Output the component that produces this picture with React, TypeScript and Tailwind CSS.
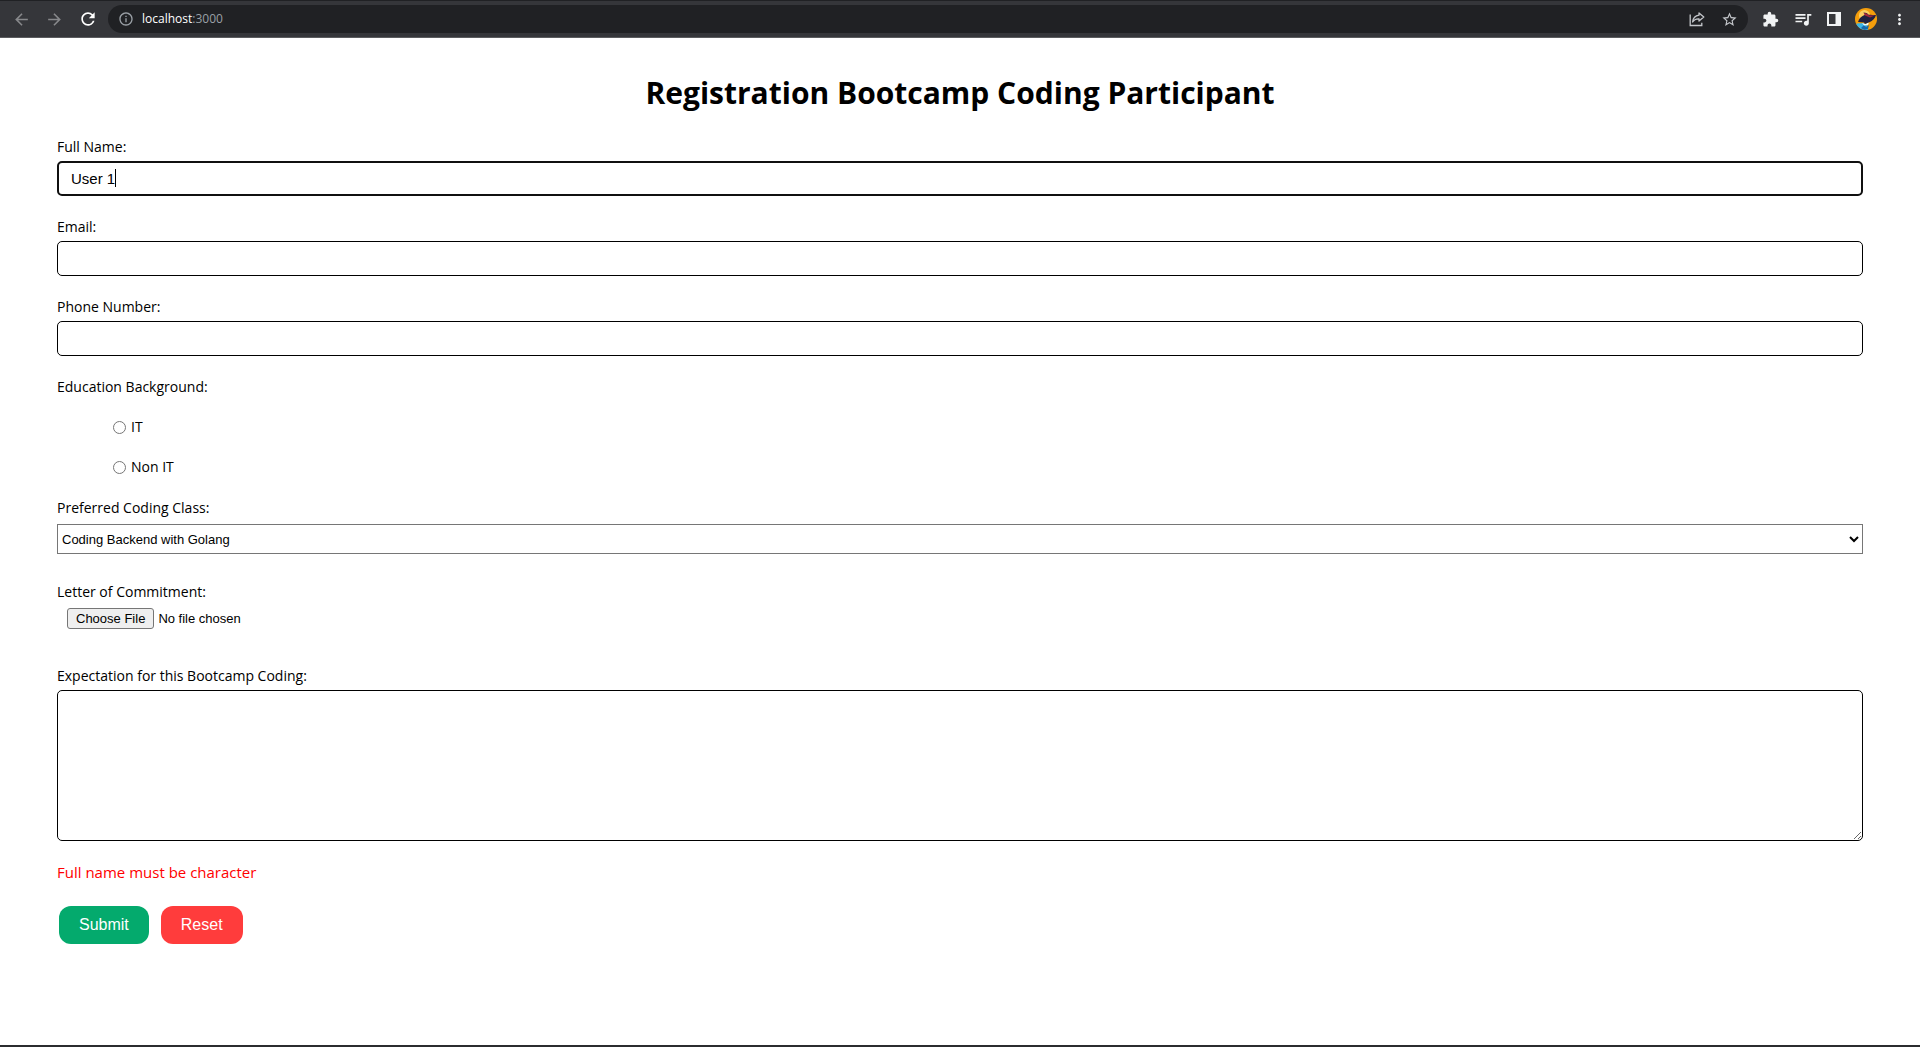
import React, { useState } from "react";
import {
  MdArrowBack,
  MdArrowForward,
  MdRefresh,
  MdInfoOutline,
  MdStarOutline,
  MdExtension,
  MdQueueMusic,
  MdMoreVert,
} from "react-icons/md";

const textBox =
  "block h-[35px] w-full rounded-[5px] border border-black bg-white px-3 font-['Liberation_Sans',Arial,sans-serif] text-[15px] text-black outline-none";

function ShareIcon() {
  return (
    <svg width="16" height="16" viewBox="0 0 16 16" fill="none" stroke="currentColor" strokeWidth="1.3">
      <path d="M1.200 3.500v11h11.600v-2.700" />
      <path d="M10 2 14.800 6 10 10V7.800C7 7.600 5 8.600 3.600 11 4 7.400 6 4.700 10 4.200Z" strokeLinejoin="round" />
    </svg>
  );
}

function SidePanelIcon() {
  return (
    <svg width="14" height="14" viewBox="0 0 14 14">
      <path fill="currentColor" fillRule="evenodd" d="M0 0h14v14H0zM2 2v10h6.500V2z" />
    </svg>
  );
}

function Avatar() {
  return (
    <svg width="22" height="22" viewBox="0 0 22 22">
      <defs>
        <clipPath id="avatar-clip">
          <circle cx="11" cy="11" r="11" />
        </clipPath>
      </defs>
      <g clipPath="url(#avatar-clip)">
        <rect width="22" height="22" fill="#f59e0b" />
        <circle cx="9.500" cy="7.500" r="5.500" fill="#fbcf62" />
        <path d="M1 16c2.500-1.500 5 0 7-1l4 2 1 5H3z" fill="#38b6e8" />
        <path d="M6 20l3-3 2 2 3-2-1 4-4 1z" fill="#1769aa" />
        <path d="M7 15l3 1 4-1.500-1 2.500-4 .5z" fill="#e8f7fd" />
        <path d="M3 14c1-3.500 3.500-6 7-7.300L8.500 4.500c2.300 0 4 .8 5 2.200 3 0 5 .3 7.500.3l-1 2.500c-2 3-4.500 4.700-7 5.200L10 16l-1-1.500z" fill="#20213f" />
        <path d="M8.500 4.700c3 .3 4.500 1.500 5.500 2.800l6-.2-5 2.200-5-2z" fill="#a3273a" />
      </g>
    </svg>
  );
}

function BrowserBar() {
  return (
    <header className="flex h-[38px] items-center border-t border-b border-t-[#202124] border-b-[#5b5c5f] bg-[#35363a] px-3 font-['Open_Sans','Noto_Sans',sans-serif]">
      <nav className="flex items-center gap-3.5 text-[#87888b]">
        <button type="button" aria-label="Back"><MdArrowBack size={19} /></button>
        <button type="button" aria-label="Forward"><MdArrowForward size={19} /></button>
        <button type="button" aria-label="Reload" className="text-white"><MdRefresh size={20} /></button>
      </nav>
      <div className="ml-2.5 flex h-7 flex-1 items-center rounded-full bg-[#202124] px-2.5 text-[#9aa0a6]">
        <MdInfoOutline size={16} />
        <p className="ml-2 flex-1 text-[12px]">
          <span className="text-white">localhost</span>:3000
        </p>
        <div className="flex items-center gap-4 text-[#c4c7cb]">
          <button type="button" aria-label="Share"><ShareIcon /></button>
          <button type="button" aria-label="Bookmark"><MdStarOutline size={17} /></button>
        </div>
      </div>
      <div className="ml-3.5 flex items-center gap-3.5 text-[#f1f3f4]">
        <button type="button" aria-label="Extensions"><MdExtension size={17} /></button>
        <button type="button" aria-label="Media"><MdQueueMusic size={20} /></button>
        <button type="button" aria-label="Side panel"><SidePanelIcon /></button>
        <button type="button" aria-label="Profile"><Avatar /></button>
        <button type="button" aria-label="Menu"><MdMoreVert size={17} /></button>
      </div>
    </header>
  );
}

function Field({ id, label, children }: { id: string; label: string; children: React.ReactNode }) {
  return (
    <div className="flex flex-col gap-0.5">
      <label htmlFor={id} className="self-start">{label}</label>
      {children}
    </div>
  );
}

export default function App() {
  const [name, setName] = useState("User 1");
  return (
    <div className="flex min-h-screen flex-col border-b-2 border-[#2b2c2f] bg-white text-black">
      <BrowserBar />
      <main className="flex-1 px-[57px] pt-8 pb-8 font-['Open_Sans','Noto_Sans',sans-serif] text-[14px] leading-6">
        <h1 className="text-center text-[30px] leading-[46px] font-bold">
          Registration Bootcamp Coding Participant
        </h1>
        <form className="mt-[19px] flex flex-col gap-[19px]" onSubmit={(e) => e.preventDefault()}>
          <Field id="name" label="Full Name:">
            <div className="relative">
              <input
                id="name"
                type="text"
                value={name}
                onChange={(e) => setName(e.target.value)}
                className="block h-[35px] w-full rounded-[5px] border-2 border-[#101010] bg-white px-3 font-['Liberation_Sans',Arial,sans-serif] text-[15px] text-black outline-none"
              />
              <span className="pointer-events-none absolute top-2 left-[58px] h-[18px] w-px bg-black" />
            </div>
          </Field>
          <Field id="email" label="Email:">
            <input id="email" type="email" className={textBox} />
          </Field>
          <Field id="phone" label="Phone Number:">
            <input id="phone" type="tel" className={textBox} />
          </Field>
          <fieldset>
            <legend>Education Background:</legend>
            <div className="mt-2 ml-14 flex flex-col">
              <label className="flex h-10 items-center gap-[5px]">
                <input type="radio" name="education" value="it" className="size-[13px]" />
                IT
              </label>
              <label className="flex h-10 items-center gap-[5px]">
                <input type="radio" name="education" value="non-it" className="size-[13px]" />
                Non IT
              </label>
            </div>
          </fieldset>
          <div className="-mt-2.5 flex flex-col gap-[26px]">
            <Field id="class" label="Preferred Coding Class:">
              <select
                id="class"
                className="mt-0.5 h-[30px] w-full border border-[#767676] bg-white font-['Liberation_Sans',Arial,sans-serif] text-[13px] text-black"
              >
                <option>Coding Backend with Golang</option>
                <option>Coding Frontend with ReactJS</option>
                <option>Fullstack Developer</option>
              </select>
            </Field>
            <Field id="letter" label="Letter of Commitment:">
              <input
                id="letter"
                type="file"
                className="mt-0.5 h-[30px] px-2.5 font-['Liberation_Sans',Arial,sans-serif] text-[13px] leading-[15px] file:mr-1 file:rounded-[3px] file:border file:border-solid file:border-[#767676] file:bg-[#efefef] file:px-2 file:py-0.5"
              />
            </Field>
            <Field id="expectation" label="Expectation for this Bootcamp Coding:">
              <textarea
                id="expectation"
                className="block h-[151px] w-full resize rounded-[5px] border border-black bg-white p-3 outline-none"
              />
            </Field>
          </div>
          <p role="alert" className="text-[15px] text-[#ff0000]">Full name must be character</p>
          <div className="flex gap-3 px-0.5 pt-[3px] font-['Liberation_Sans',Arial,sans-serif] text-[16px] text-white">
            <button type="submit" className="h-[38px] rounded-xl bg-[#04aa6d] px-5">Submit</button>
            <button type="reset" className="h-[38px] rounded-xl bg-[#ff3c3c] px-5">Reset</button>
          </div>
        </form>
      </main>
    </div>
  );
}
